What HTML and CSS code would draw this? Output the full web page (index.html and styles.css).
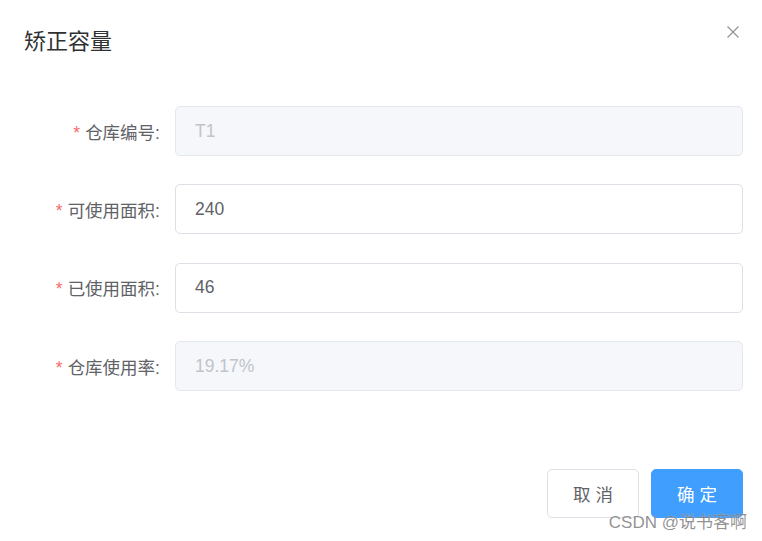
FILE: index.html
```html
<!DOCTYPE html>
<html lang="zh">
<head>
<meta charset="utf-8">
<link rel="stylesheet" href="styles.css">
</head>
<body>
<div class="dialog">
  <div class="header">
    <span class="title">矫正容量</span>
    <button class="close" aria-label="close">
      <svg width="12" height="12" viewBox="0 0 12 12"><path d="M0.5 0.5L11.5 11.5M11.5 0.5L0.5 11.5" stroke="#909399" stroke-width="1.2" fill="none"/></svg>
    </button>
  </div>
  <div class="body">
    <div class="item">
      <label class="label"><span class="req">*</span>仓库编号:</label>
      <div class="input disabled">T1</div>
    </div>
    <div class="item">
      <label class="label"><span class="req">*</span>可使用面积:</label>
      <div class="input">240</div>
    </div>
    <div class="item">
      <label class="label"><span class="req">*</span>已使用面积:</label>
      <div class="input">46</div>
    </div>
    <div class="item">
      <label class="label"><span class="req">*</span>仓库使用率:</label>
      <div class="input disabled">19.17%</div>
    </div>
  </div>
  <div class="footer">
    <button class="btn">取 消</button>
    <button class="btn primary">确 定</button>
  </div>
</div>
<div class="watermark">CSDN @说书客啊</div>
</body>
</html>
```

FILE: styles.css
```css
html, body {
  margin: 0;
  padding: 0;
  background: #fff;
  width: 762px;
  height: 541px;
  overflow: hidden;
  font-family: "Liberation Sans", "Noto Sans CJK SC", sans-serif;
}
.dialog {
  position: relative;
  background: #fff;
}
.header {
  display: flex;
  justify-content: space-between;
  align-items: center;
  padding: 27px 19px 11px 24px;
  height: 30px;
}
.title {
  font-size: 22px;
  line-height: 30px;
  color: #303133;
}
.close {
  border: 0;
  background: none;
  padding: 0;
  margin-top: -20px;
  margin-right: 4px;
  width: 12px;
  height: 12px;
  display: flex;
}
.body {
  padding: 38px 19px 38px 24px;
  display: flex;
  flex-direction: column;
  gap: 28.4px;
}
.item {
  display: flex;
  align-items: center;
  height: 50px;
}
.label {
  width: 136px;
  padding-right: 15px;
  text-align: right;
  font-size: 17.5px;
  color: #606266;
  box-sizing: content-box;
}
.req {
  color: #F56C6C;
  margin-right: 5px;
}
.input {
  flex: 1;
  height: 48px;
  border: 1px solid #DCDFE6;
  border-radius: 5px;
  padding: 0 19px;
  display: flex;
  align-items: center;
  font-size: 17.5px;
  color: #606266;
}
.input.disabled {
  background: #F5F7FA;
  border-color: #E4E7ED;
  color: #C0C4CC;
}
.footer {
  display: flex;
  justify-content: flex-end;
  gap: 12px;
  padding: 40px 19px 0 24px;
}
.btn {
  width: 92px;
  height: 49px;
  border: 1px solid #DCDFE6;
  border-radius: 5px;
  background: #fff;
  color: #606266;
  font-size: 17.5px;
  font-family: "Liberation Sans", "Noto Sans CJK SC", sans-serif;
  padding: 0;
}
.btn.primary {
  background: #409EFF;
  border-color: #409EFF;
  color: #fff;
}
.watermark {
  position: absolute;
  right: 15px;
  bottom: 9px;
  font-size: 17px;
  line-height: 18px;
  color: rgba(110, 110, 110, 0.75);
  text-shadow: 0 0 1px rgba(255,255,255,0.6);
}
```
